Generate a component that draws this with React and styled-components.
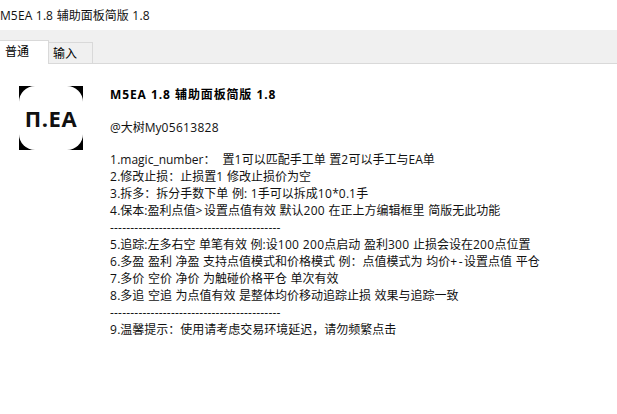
import React from "react";
import styled, { createGlobalStyle } from "styled-components";

const Global = createGlobalStyle`
  html, body { margin: 0; padding: 0; background: #fff; }
  body { font-family: "Open Sans", "Noto Sans CJK SC", sans-serif; color: #000; }
`;
const Page = styled.div`
  width: 617px; height: 414px; overflow: hidden; display: flex; flex-direction: column; background: #fff;
`;
const TitleBar = styled.div`
  height: 30px; display: flex; align-items: center; font-size: 12px; white-space: pre; color: #111; word-spacing: 0.4px;
`;
const TabStrip = styled.div`
  height: 33px; background: #f0f0f0; border-bottom: 1px solid #d9d9d9; display: flex; align-items: flex-end;
`;
const Tab = styled.div`
  box-sizing: border-box;
  display: flex; align-items: center;
  font-size: 12px; white-space: pre;
  border: 1px solid #d9d9d9;
  border-bottom: ${p => (p.$active ? "none" : "1px solid #d9d9d9")};
  border-left: ${p => (p.$active ? "none" : "0")};
  background: ${p => (p.$active ? "#fff" : "#f0f0f0")};
  width: ${p => (p.$active ? "49px" : "44px")};
  height: ${p => (p.$active ? "24px" : "22px")};
  margin-bottom: -1px;
  padding-left: ${p => (p.$active ? "5px" : "4px")};
  padding-bottom: ${p => (p.$active ? "3px" : "0")};
`;
const Body = styled.div`
  display: flex; padding: 22px 0 0 19px; gap: 27px;
`;
const Logo = styled.div`
  width: 64px; height: 64px; background: #000; flex: none; display: flex;
`;
const LogoInner = styled.div`
  flex: 1; background: #fff; border-radius: 16px; display: flex; align-items: center; justify-content: center;
  font-family: "Open Sans", "DejaVu Sans", sans-serif; font-weight: 700; font-size: 22px; letter-spacing: 0.6px; color: #111;
`;
const Text = styled.div`
  font-size: 12px; line-height: 17px; white-space: pre; color: #111; word-spacing: 0.45px;
`;
const Heading = styled.div`
  font-weight: 700; color: #000; margin-bottom: 16px; height: 17px; letter-spacing: 0.85px;
`;
const Author = styled.div`
  margin-bottom: 15px;
`;
const Line = styled.div`
  height: 17px;
  letter-spacing: ${p => (p.$rule ? "0.2px" : "0")};
`;
const Wide = styled.span`
  letter-spacing: ${p => (p.$sign ? "1.6px" : "0.3px")};
`;

const withWide = s =>
  s.split(/(\d+|[+>-]+)/).map((part, i) =>
    i % 2 ? <Wide key={i} $sign={/[+>-]/.test(part)}>{part}</Wide> : part
  );

const lines = [
  "1.magic_number：  置1可以匹配手工单 置2可以手工与EA单",
  "2.修改止损：止损置1 修改止损价为空",
  "3.拆多：拆分手数下单 例: 1手可以拆成10*0.1手",
  "4.保本:盈利点值>设置点值有效 默认200 在正上方编辑框里 简版无此功能",
  "------------------------------------------",
  "5.追踪:左多右空 单笔有效 例:设100 200点启动 盈利300 止损会设在200点位置",
  "6.多盈 盈利 净盈 支持点值模式和价格模式 例：点值模式为 均价+-设置点值 平仓",
  "7.多价 空价 净价 为触碰价格平仓 单次有效",
  "8.多追 空追 为点值有效 是整体均价移动追踪止损 效果与追踪一致",
  "------------------------------------------",
  "9.温馨提示：使用请考虑交易环境延迟，请勿频繁点击",
];

export default function App() {
  return (
    <Page>
      <Global />
      <TitleBar>{withWide("M5EA 1.8 辅助面板简版 1.8")}</TitleBar>
      <TabStrip>
        <Tab $active>普通</Tab>
        <Tab>输入</Tab>
      </TabStrip>
      <Body>
        <Logo><LogoInner>П.EA</LogoInner></Logo>
        <Text>
          <Heading>M5EA 1.8 辅助面板简版 1.8</Heading>
          <Author>{withWide("@大树My05613828")}</Author>
          {lines.map((l, i) =>
            l.startsWith("--") ? <Line key={i} $rule>{l}</Line> : <Line key={i}>{withWide(l)}</Line>
          )}
        </Text>
      </Body>
    </Page>
  );
}
